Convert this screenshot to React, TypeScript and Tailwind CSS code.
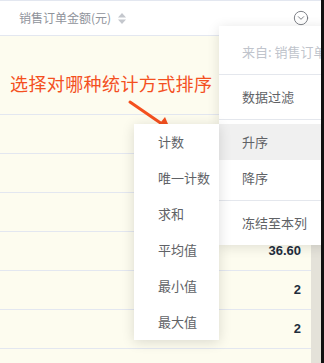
import React from 'react';
import { CircleChevronDown } from 'lucide-react';

const cjk = { fontFamily: '"Noto Sans CJK SC", "Noto Sans", sans-serif' };

const rows = [
    { h: 'h-[79px]', value: '' },
    { h: 'h-[39px]', value: '' },
    { h: 'h-[39px]', value: '' },
    { h: 'h-[39px]', value: '' },
    { h: 'h-[39px]', value: '36.60' },
    { h: 'h-[39px]', value: '2' },
    { h: 'h-[39px]', value: '2' },
    { h: 'h-[39px]', value: '' },
];

const statItems = ['计数', '唯一计数', '求和', '平均值', '最小值', '最大值'];

export default function App() {
    return (
        <div className="relative w-[324px] h-[363px] overflow-hidden flex bg-white" style={cjk}>
            <div className="w-[321px] flex flex-col">
                {/* column header */}
                <div className="h-[36px] shrink-0 flex items-center border-t border-b border-[#e3e7f0] bg-white pl-[19px] pr-[12px]">
                    <span className="text-[12px] text-[#8f939b]">销售订单金额(元)</span>
                    <svg width="10" height="13" viewBox="0 0 10 13" className="ml-[6px]">
                        <path d="M5 1 L9 5.5 L1 5.5 Z" fill="#c4c7cd" />
                        <path d="M5 12 L9 7.5 L1 7.5 Z" fill="#c4c7cd" />
                    </svg>
                    <CircleChevronDown className="ml-auto text-[#6b6e75]" size={16} strokeWidth={1.3} />
                </div>

                {/* body */}
                <div className="flex-1 flex bg-[#fdfcef]">
                    <div className="flex-1 flex flex-col">
                        {rows.map((r, i) => (
                            <div
                                key={i}
                                className={`${r.h} shrink-0 border-b border-[#e3e7f0] flex items-center justify-end pr-[10px]`}
                            >
                                <span
                                    className="text-[13px] font-bold text-[#1f2d3d]"
                                    style={{ fontFamily: '"Liberation Sans", Arial, sans-serif' }}
                                >
                                    {r.value}
                                </span>
                            </div>
                        ))}
                    </div>
                    <div className="w-[10px] bg-[#e4e2d9]" />
                </div>
            </div>
            <div className="relative z-20 w-[3px] bg-[#111]" />

            {/* annotation */}
            <div className="absolute left-[10px] top-[71px] text-[18px] tracking-[0.4px] text-[#f4501f] leading-[24px]">
                选择对哪种统计方式排序
            </div>
            <svg className="absolute left-[126px] top-[98px] z-10" width="52" height="40" viewBox="0 0 52 40">
                <line x1="4" y1="4" x2="36" y2="26" stroke="#f4501f" strokeWidth="3" strokeLinecap="round" />
                <path d="M45 33 L30 30 L39 19 Z" fill="#f4501f" />
            </svg>

            {/* column dropdown */}
            <div className="absolute left-[219px] top-[26px] w-[110px] bg-white shadow-[0_2px_12px_rgba(0,0,0,0.12)] text-[13px] text-[#606266]">
                <div className="pt-2 pb-1">
                    <div className="h-[36px] flex items-center pl-[23px] whitespace-nowrap text-[#c0c4cc]">来自: 销售订单金额</div>
                </div>
                <div className="h-px bg-[#e4e7ed]" />
                <div className="py-1">
                    <div className="h-[36px] flex items-center pl-[23px]">数据过滤</div>
                </div>
                <div className="h-px bg-[#e4e7ed]" />
                <div className="py-1">
                    <div className="h-[36px] flex items-center pl-[23px] bg-[#f0f0f0]">升序</div>
                    <div className="h-[36px] flex items-center pl-[23px]">降序</div>
                </div>
                <div className="h-px bg-[#e4e7ed]" />
                <div className="py-1">
                    <div className="h-[36px] flex items-center pl-[23px]">冻结至本列</div>
                </div>
            </div>

            {/* statistic submenu */}
            <div className="absolute left-[134px] top-[124px] w-[85px] bg-white shadow-[0_2px_12px_rgba(0,0,0,0.14)] text-[13px] text-[#606266] z-10">
                {statItems.map(s => (
                    <div key={s} className="h-[36px] flex items-center pl-[24px]">{s}</div>
                ))}
            </div>
        </div>
    );
}
